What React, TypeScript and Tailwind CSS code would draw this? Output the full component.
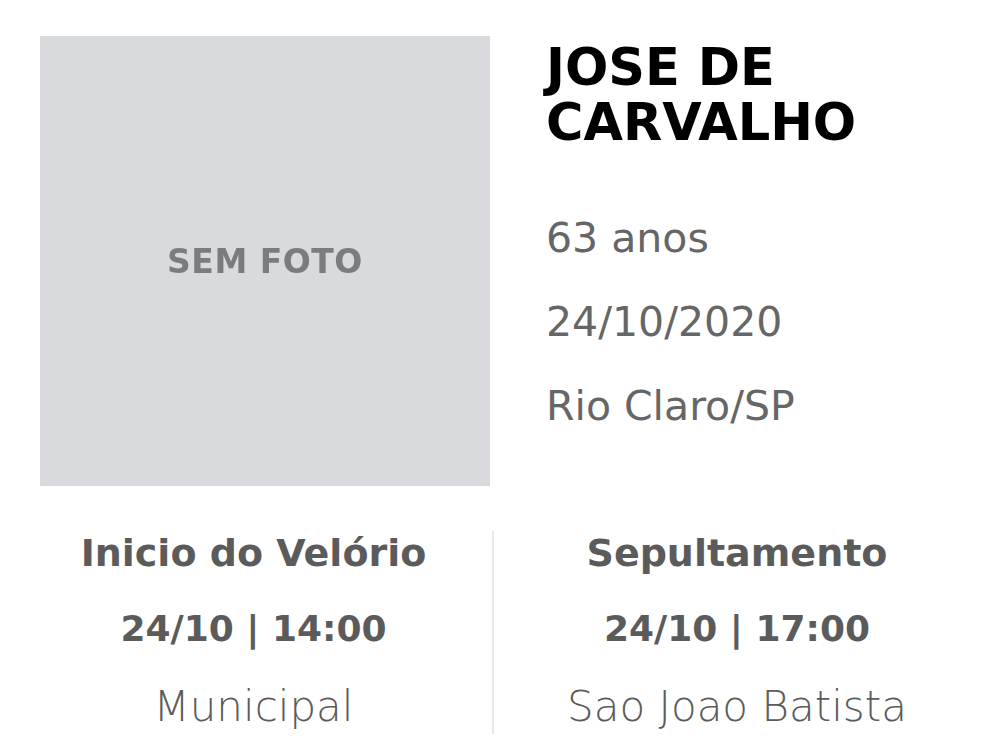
export default function App() {
  const font = { fontFamily: '"DejaVu Sans", "Liberation Sans", sans-serif' };
  return (
    <div className="w-[993px] h-[755px] bg-white overflow-hidden" style={font}>
      <div className="flex pt-[36px] pl-[40px]">
        <div className="w-[450px] h-[450px] bg-[#d9dadd] flex items-center justify-center shrink-0">
          <span className="text-[#7b7c80] font-bold text-[33px] tracking-[0.5px] blur-[0.7px] mb-[-2px]">
            SEM FOTO
          </span>
        </div>
        <div className="ml-[56px] pt-[4px]">
          <h1 className="text-black font-bold text-[51px] leading-[55px]">
            JOSE DE
            <br />
            CARVALHO
          </h1>
          <div className="mt-[46px] text-[#666666] text-[41px] leading-[84px]">
            <p>63 anos</p>
            <p>24/10/2020</p>
            <p>Rio Claro/SP</p>
          </div>
        </div>
      </div>
      <div className="flex mt-[29px] ml-[15px]">
        <div className="w-[477px] flex flex-col items-center text-center">
          <p className="text-[#5b5b5b] font-bold text-[38px] leading-[76px]">Inicio do Velório</p>
          <p className="text-[#5b5b5b] font-bold text-[36px] leading-[76px]">24/10 | 14:00</p>
          <p className="text-[#5b5b5b] font-extralight text-[42px] leading-[80px]">Municipal</p>
        </div>
        <div className="w-[2px] bg-[#e8e8e8] mt-[16px] mb-[13px]" />
        <div className="w-[486px] flex flex-col items-center text-center">
          <p className="text-[#5b5b5b] font-bold text-[38px] leading-[76px]">Sepultamento</p>
          <p className="text-[#5b5b5b] font-bold text-[36px] leading-[76px]">24/10 | 17:00</p>
          <p className="text-[#5b5b5b] font-extralight text-[42px] leading-[80px]">Sao Joao Batista</p>
        </div>
      </div>
    </div>
  );
}
